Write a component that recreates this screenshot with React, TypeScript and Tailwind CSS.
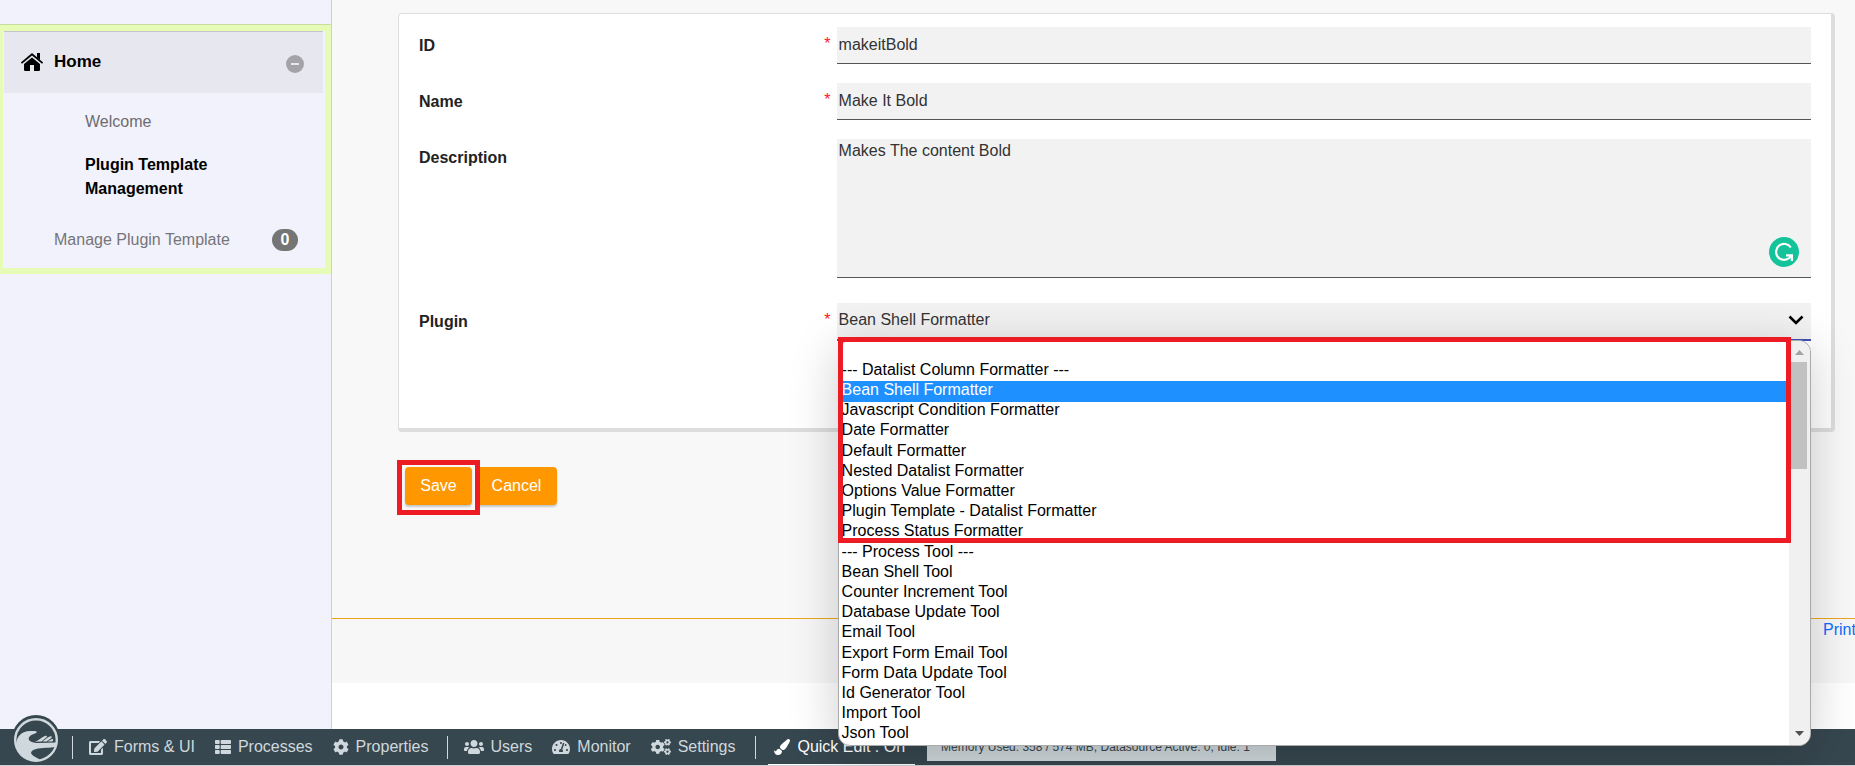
import type { ReactNode } from "react";
import { FaEdit, FaThList, FaCog, FaUsers, FaTachometerAlt, FaCogs, FaPaintBrush } from "react-icons/fa";

const options = [
  "",
  "--- Datalist Column Formatter ---",
  "Bean Shell Formatter",
  "Javascript Condition Formatter",
  "Date Formatter",
  "Default Formatter",
  "Nested Datalist Formatter",
  "Options Value Formatter",
  "Plugin Template - Datalist Formatter",
  "Process Status Formatter",
  "--- Process Tool ---",
  "Bean Shell Tool",
  "Counter Increment Tool",
  "Database Update Tool",
  "Email Tool",
  "Export Form Email Tool",
  "Form Data Update Tool",
  "Id Generator Tool",
  "Import Tool",
  "Json Tool",
];

const selected = "Bean Shell Formatter";

function HomeIcon() {
  return (
    <svg viewBox="0 0 22 18" className="h-[18px] w-[22px] shrink-0" aria-hidden="true">
      <path d="M11 4.6 19 11V16.800Q19 18 17.800 18H13V12H9V18H4.200Q3 18 3 16.800V11Z" />
      <path d="M1 9.600 11 1.200 21 9.600" fill="none" stroke="#000" strokeWidth="1.800" strokeLinecap="round" strokeLinejoin="round" />
      <path d="M16 0h3v7l-3-2.500z" />
    </svg>
  );
}

function Logo() {
  return (
    <svg viewBox="0 0 48 48" className="h-12 w-12" aria-hidden="true">
      <circle cx="24" cy="24" r="24" fill="#37474f" />
      <circle cx="24" cy="25" r="20.800" fill="none" stroke="#cfd8dc" strokeWidth="2.400" />
      <path
        fill="#cfd8dc"
        d="M4 29C5 21 10 16 18 16C21 16 24.700 15.500 24.700 17C24.700 18.700 22 18.500 19.500 20C17 21.500 15.500 24 18 26C20 27.500 23 28 27 28L44 27.500V31.500C42 33 32 32.500 26 33.500C21 34.500 18 36.500 19.500 39C21.500 42 27 43 28.500 45.500C16 48 4 41 4 29Z"
      />
      <path fill="#cfd8dc" d="M23 26.800C27 25.500 29.500 22 33.500 20.800C35.500 20.500 35.500 21.500 34 22.800L29.500 26.600ZM30.500 26.500 36 22.200C39.500 20.500 41 21.500 39 23.200L34.500 26.500ZM35.500 26.500 39.500 24.200C41.500 23.500 42 26 40 26.500Z" />
    </svg>
  );
}

function Row({ id, label, required, children }: { id: string; label: string; required?: boolean; children: ReactNode }) {
  return (
    <div className="flex items-start">
      <div className="flex w-[30%] shrink-0 justify-between pr-1.5 pt-[9px] leading-5">
        <label htmlFor={id} className="font-bold">{label}</label>
        {required && <span className="text-base leading-4 text-[#ff1a1a]">*</span>}
      </div>
      <div className="relative min-w-0 flex-1">{children}</div>
    </div>
  );
}

function BarLink({ icon, children }: { icon: ReactNode; children: ReactNode }) {
  return (
    <a href="#" className="flex items-center gap-[7px] whitespace-nowrap">
      {icon}
      {children}
    </a>
  );
}

function PluginList() {
  return (
    <div className="absolute left-px right-0 top-[37px] z-20 flex overflow-visible rounded-xl border border-[#aaa] bg-white shadow-[0_8px_50px_rgba(0,0,0,0.2)]">
      <ul role="listbox" aria-label="Plugin" className="flex h-[404px] min-w-0 flex-1 flex-col text-black">
        {options.map((option) => (
          <li
            key={option}
            role="option"
            aria-selected={option === selected}
            className={
              option === selected
                ? "flex flex-1 items-center bg-[#1e90ff] pb-[3px] pl-[3px] leading-4 text-white"
                : "flex flex-1 items-center pb-[3px] pl-[3px] leading-4"
            }
          >
            {option}
          </li>
        ))}
      </ul>
      <div className="flex w-[21px] flex-col items-center justify-between rounded-r-xl bg-[#f0f0f0]">
        <div className="flex w-full flex-col items-center">
          <svg viewBox="0 0 9 5" className="mb-[7px] mt-[9px] h-[5px] w-[9px]" aria-hidden="true">
            <path d="M0 5 4.500 0 9 5Z" fill="#a3a3a3" />
          </svg>
          <div className="mr-0.5 h-[107px] w-[17px] bg-[#c1c1c1]" />
        </div>
        <svg viewBox="0 0 9 5" className="mb-[9px] h-[5px] w-[9px]" aria-hidden="true">
          <path d="M0 0 4.500 5 9 0Z" fill="#505050" />
        </svg>
      </div>
      <div className="pointer-events-none absolute -left-px -top-1 right-[19px] h-[206px] border-[5px] border-[#ed1c24]" />
    </div>
  );
}

export default function App() {
  const field = "block w-full border-b border-[#555] bg-[#f2f2f2] pl-0.5 text-[#333] outline-none";
  return (
    <div className="relative flex h-screen flex-col overflow-hidden bg-white font-['Liberation_Sans',Arial,sans-serif] text-base text-[#222]">
      <div className="flex min-h-0 flex-1">
        <aside className="w-[332px] shrink-0 border-r border-[#cfcfd6] bg-[#f2f2fc] pt-6">
          <nav className="border-t border-[#c8dca0]">
            <div className="border-y-[6px] border-l-[3px] border-r-[6px] border-[#e6fbb5] pb-4">
              <div className="ml-px mr-0.5 flex h-[62px] items-center border-t border-[#c5c5cd] bg-[#e7e7f0] pb-0.5 pl-[17px] pr-[19px]">
                <HomeIcon />
                <a href="#" className="ml-[11px] flex-1 text-[17px] font-bold text-black">Home</a>
                <button aria-label="Collapse" className="mt-1 flex h-[18px] w-[18px] items-center justify-center rounded-full bg-[#a3a3a8]">
                  <span className="h-0.5 w-2 bg-[#e7e7f0]" />
                </button>
              </div>
              <ul className="pl-[82px] pt-[13px] text-[#6b6b70]">
                <li className="py-1 leading-6"><a href="#">Welcome</a></li>
                <li className="w-40 pb-2 pt-[15px] leading-6"><a href="#" className="block font-bold text-black">Plugin Template Management</a></li>
              </ul>
              <div className="flex items-center justify-between pl-[51px] pr-[27px] pt-[19px] text-[#75757a]">
                <a href="#">Manage Plugin Template</a>
                <span className="flex h-[22px] w-[26px] items-center justify-center rounded-full bg-[#757575] font-bold text-white">0</span>
              </div>
            </div>
          </nav>
        </aside>

        <main className="min-w-0 flex-1">
          <div className="bg-[#f8f8f8] pl-[66px] pr-5 pt-[13px]">
            <form>
              <div className="rounded border-b-4 border-l border-r-4 border-t border-[#ddd] bg-white px-5 pb-[87px] pt-[13px]">
                <div className="flex flex-col gap-[19px]">
                  <Row id="id" label="ID" required>
                    <input id="id" defaultValue="makeitBold" className={`${field} h-[37px]`} />
                  </Row>
                  <Row id="name" label="Name" required>
                    <input id="name" defaultValue="Make It Bold" className={`${field} h-[37px]`} />
                  </Row>
                  <Row id="description" label="Description">
                    <textarea id="description" defaultValue="Makes The content Bold" className={`${field} h-[139px] resize-none leading-6`} />
                    <svg viewBox="0 0 30 30" className="absolute bottom-[11px] right-3 h-[30px] w-[30px]" aria-hidden="true">
                      <circle cx="15" cy="15" r="15" fill="#15c39a" />
                      <path d="M21.800 10.500A8 8 0 1 0 20.500 20.800L22.300 18.500" fill="none" stroke="#fff" strokeWidth="2.200" />
                      <path d="M17 17.200H24V24H21.800V21.500L20 19.400H17Z" fill="#fff" />
                    </svg>
                  </Row>
                  <div className="pt-1.5">
                    <Row id="plugin" label="Plugin" required>
                      <select id="plugin" defaultValue={selected} className="block h-[38px] w-full appearance-none border-b-2 border-[#3f51b5] bg-[#f2f2f2] pb-0.5 pl-0.5 text-[#333] outline-none">
                        {options.map((option) => (
                          <option key={option}>{option}</option>
                        ))}
                      </select>
                      <svg viewBox="0 0 16 10" className="pointer-events-none absolute right-[7px] top-3 h-2.5 w-4" aria-hidden="true">
                        <path d="M1.500 1.500 8 8 14.500 1.500" fill="none" stroke="#000" strokeWidth="2.600" />
                      </svg>
                      <PluginList />
                    </Row>
                  </div>
                </div>
              </div>
              <div className="flex pb-[113px] pl-[7px] pt-[35px] text-white">
                <div className="relative mr-1">
                  <button type="button" className="h-[38px] w-[67px] rounded bg-[#ff9800] shadow-[0_2px_2px_rgba(0,0,0,0.2)]">Save</button>
                  <div className="pointer-events-none absolute -left-2 -right-2 -top-[7px] h-[55px] border-[5px] border-[#ed1c24]" />
                </div>
                <button type="button" className="h-[38px] w-[81px] rounded bg-[#ff9800] shadow-[0_2px_2px_rgba(0,0,0,0.2)]">Cancel</button>
              </div>
            </form>
          </div>
          <footer className="flex h-[65px] justify-end overflow-hidden border-t border-[#eda61c] bg-[#f7f7f7]">
            <a href="#" className="w-8 whitespace-nowrap pt-px leading-5 text-[#0d6efd]">Print</a>
          </footer>
        </main>
      </div>

      <div className="flex h-[37px] shrink-0 items-center border-b border-[#ccd0d2] bg-[#37474f] pl-3 text-[#cfd8dc]">
        <a href="#" aria-label="App center" className="-mt-4"><Logo /></a>
        <div className="ml-3 flex h-[23px] items-center gap-5 border-l border-[#cfd8dc] pl-4">
          <BarLink icon={<FaEdit className="h-4 w-[18px]" />}>Forms &amp; UI</BarLink>
          <BarLink icon={<FaThList className="h-4 w-4" />}>Processes</BarLink>
          <BarLink icon={<FaCog className="h-4 w-4" />}>Properties</BarLink>
        </div>
        <div className="ml-[18px] flex h-[23px] items-center gap-5 border-l border-[#cfd8dc] pl-4">
          <BarLink icon={<FaUsers className="h-4 w-5" />}>Users</BarLink>
          <BarLink icon={<FaTachometerAlt className="h-4 w-[18px]" />}>Monitor</BarLink>
          <BarLink icon={<FaCogs className="h-4 w-5" />}>Settings</BarLink>
        </div>
        <div className="ml-5 h-[23px] border-l border-[#cfd8dc]" />
        <div className="ml-3 flex h-9 border-b border-white pl-1.5 pr-2.5 text-white">
          <BarLink icon={<FaPaintBrush className="h-4 w-4" />}>Quick Edit : On</BarLink>
        </div>
        <div className="ml-3 flex h-7 min-w-[349px] items-center whitespace-nowrap bg-[#cfd8dc] px-3.5 text-xs text-[#37474f]">
          Memory Used: 358 / 574 MB, Datasource Active: 0, Idle: 1
        </div>
      </div>
    </div>
  );
}
